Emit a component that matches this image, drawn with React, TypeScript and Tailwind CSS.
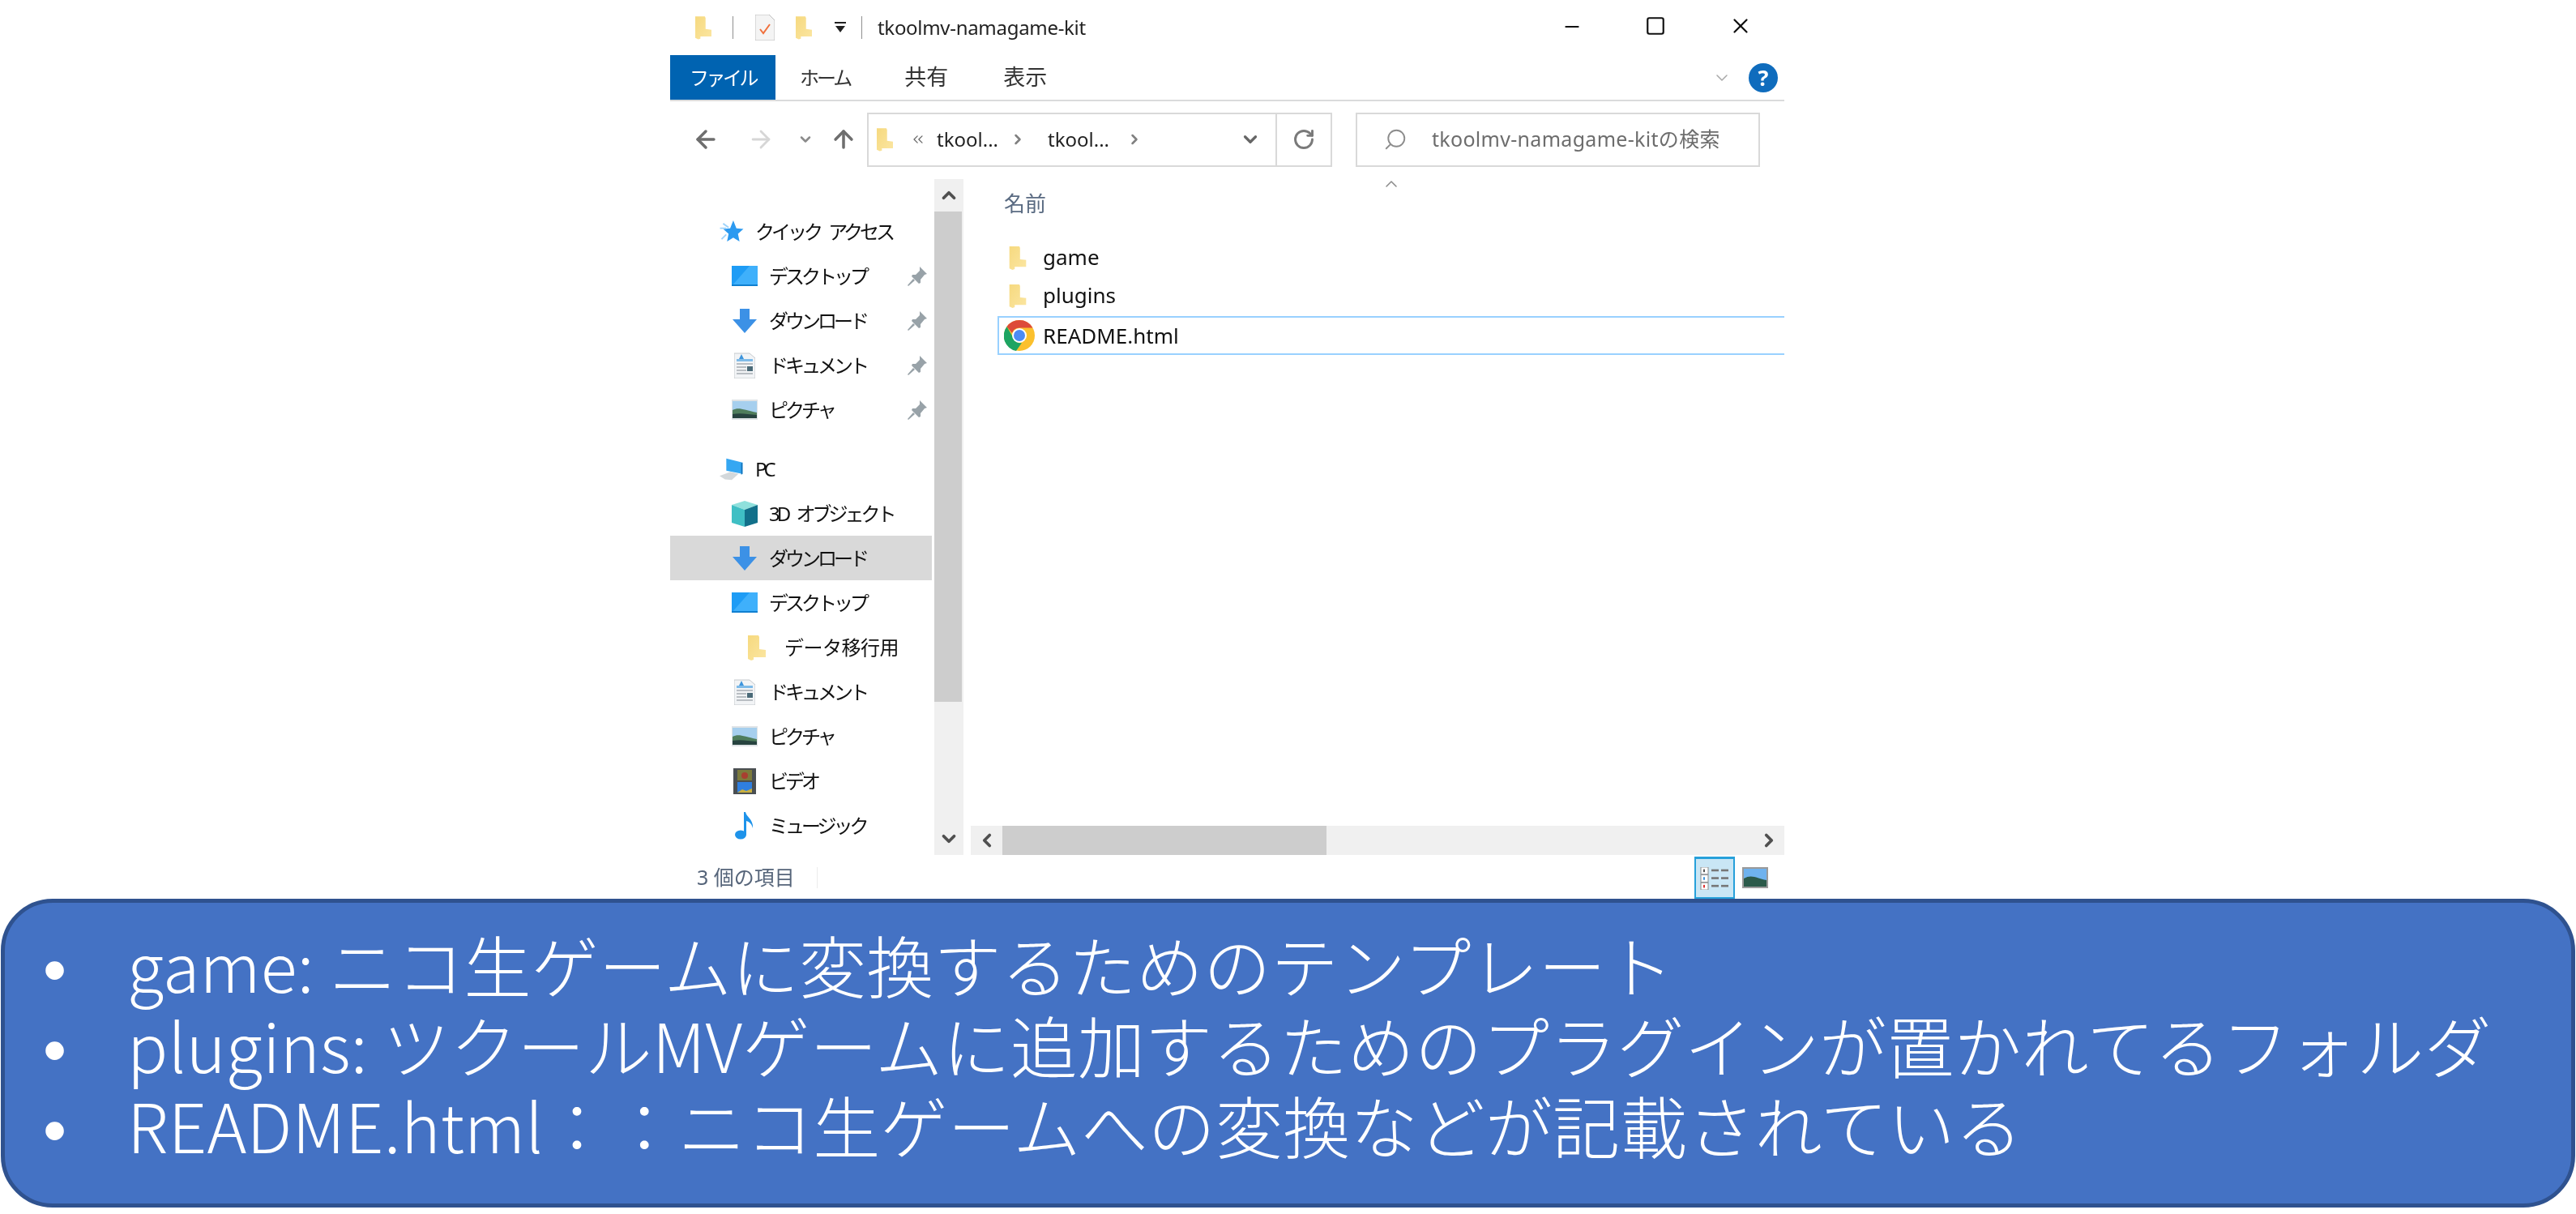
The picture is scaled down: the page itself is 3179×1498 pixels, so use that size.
import { ArrowLeft, ArrowRight, ArrowUp, ChevronDown, ChevronLeft, ChevronRight, ChevronUp, ChevronsLeft, RotateCw, Search, Minus, Square, X } from "lucide-react";

const uiFont = "font-['Noto_Sans','Noto_Sans_CJK_JP',sans-serif]";
const jpText = "text-[24px] tracking-[-4px] [word-spacing:8px] text-[#111]";

function Folder({ className = "" }: { className?: string }) {
  return (
    <svg viewBox="0 0 22 32" className={className}>
      <defs>
        <linearGradient id="fold" x1="0" y1="0" x2="1" y2="1">
          <stop offset="0" stopColor="#f6d97f" />
          <stop offset="1" stopColor="#fbe6a2" />
        </linearGradient>
      </defs>
      <path d="M0 1h13l1 2v15l8 1v9H7v3l-3 1-4-2z" fill="url(#fold)" />
    </svg>
  );
}

function Star() {
  return (
    <svg viewBox="0 0 30 28" className="w-[30px] h-[27px]">
      <path d="M17 0l4 10 9 1-7 6 2 10-8-5-8 5 2-10-7-6 9-1z" fill="#2c9af0" />
      <path d="M0 10h8M2 24l6-6M4 4l7 5" stroke="#9fd3fa" strokeWidth="2" />
    </svg>
  );
}

function Desktop() {
  return (
    <svg viewBox="0 0 32 25" className="w-[32px] h-[25px]">
      <rect width="32" height="25" fill="#1e9cf5" />
      <path d="M0 25L22 0h10v25z" fill="#3fb0fb" />
      <rect y="23" width="32" height="2" fill="#0f7fd0" />
    </svg>
  );
}

function Download() {
  return (
    <svg viewBox="0 0 30 30" className="w-[30px] h-[30px]">
      <path d="M9 0h12v13h9L15 30 0 13h9z" fill="#3c91e6" />
    </svg>
  );
}

function Doc() {
  return (
    <svg viewBox="0 0 26 32" className="w-[26px] h-[32px]">
      <path d="M0 1h19l7 6v25H0z" fill="#f2f4f6" stroke="#c4c8cc" />
      <rect x="3" y="8" width="20" height="3" fill="#7fbbe8" />
      <path d="M9 2l3 6H6z" fill="#3d94dc" />
      <path d="M3 14h20M3 18h12M3 22h12M3 26h20" stroke="#a6acb2" strokeWidth="1.5" />
      <rect x="16" y="17" width="7" height="6" fill="#4b6a78" />
    </svg>
  );
}

function Picture() {
  return (
    <svg viewBox="0 0 32 25" className="w-[32px] h-[25px]">
      <rect width="32" height="25" fill="#dfe3e6" />
      <rect x="1" y="2" width="30" height="21" fill="#a6cfee" />
      <path d="M1 13c8-4 14 0 30 3v7H1z" fill="#4f7d5c" />
      <path d="M1 18c10-2 18 0 30 1v4H1z" fill="#27433f" />
    </svg>
  );
}

function Pc() {
  return (
    <svg viewBox="0 0 36 32" className="w-[36px] h-[32px]">
      <path d="M10 0l24 6v17l-24-5z" fill="#35a7f2" />
      <path d="M34 6v17l-2 1V7z" fill="#1272b8" />
      <path d="M0 26l16-6 12 3-10 9-10-1z" fill="#d3d8db" />
    </svg>
  );
}

function Cube() {
  return (
    <svg viewBox="0 0 32 32" className="w-[32px] h-[32px]">
      <path d="M16 0l16 5-16 6L0 5z" fill="#8fe0dc" />
      <path d="M0 5l16 6v21L0 27z" fill="#3fbfc4" />
      <path d="M32 5L16 11v21l16-5z" fill="#12708a" />
    </svg>
  );
}

function Video() {
  return (
    <svg viewBox="0 0 28 32" className="w-[28px] h-[32px]">
      <rect width="28" height="32" fill="#4a4f52" />
      <rect x="5" y="2" width="18" height="13" fill="#7c7a3c" />
      <rect x="5" y="17" width="18" height="13" fill="#2f7fe0" />
      <circle cx="14" cy="9" r="4" fill="#a83f30" />
      <path d="M5 30l6-4 5 2 7-3v5z" fill="#c9b040" />
    </svg>
  );
}

function Music() {
  return (
    <svg viewBox="0 0 24 34" className="w-[24px] h-[34px]">
      <ellipse cx="7" cy="28" rx="7" ry="5.5" fill="#1e93ea" />
      <path d="M11 28V0h2c1 6 10 9 9 20-1-5-4-8-8-9v17z" fill="#1e93ea" />
    </svg>
  );
}

function Pin() {
  return (
    <svg viewBox="0 0 24 24" className="w-[24px] h-[24px]">
      <path d="M15 0l9 9-3 1-5 6 0 4-2 1-9-9 1-2 4 0 5-5z" fill="#98a2a8" />
      <path d="M7 15l-7 8 1 1 8-7z" fill="#98a2a8" />
    </svg>
  );
}

function Chrome() {
  return (
    <svg viewBox="0 0 38 38" className="w-[38px] h-[38px]">
      <circle cx="19" cy="19" r="19" fill="#fbc02d" />
      <path d="M19 0a19 19 0 0 1 16.5 9.500H19a9.500 9.500 0 0 0-9 6.500L3.500 8A19 19 0 0 1 19 0z" fill="#dd4b39" />
      <path d="M3.500 8L11 21a9.500 9.500 0 0 0 11 7L15 38A19 19 0 0 1 3.500 8z" fill="#1da462" />
      <circle cx="19" cy="19" r="9" fill="#fff" />
      <circle cx="19" cy="19" r="7" fill="#4c8bf5" />
    </svg>
  );
}

function DetailsView() {
  return (
    <svg viewBox="0 0 36 32" preserveAspectRatio="none" className="w-[36px] h-[28px]">
      {[0, 11, 22].map((y, i) => (
        <g key={y}>
          <rect x="1" y={y} width="9" height="10" fill="#fff" stroke="#8a8a8a" />
          <rect x="4" y={y + 3} width="2" height="4" fill={["#555", "#3d94dc", "#d33"][i]} />
          <rect x="14" y={y + 3} width="9" height="3" fill="#777" />
          <rect x="26" y={y + 3} width="9" height="3" fill="#777" />
        </g>
      ))}
    </svg>
  );
}

function NavRow({ icon, label, pin, level = 1, selected, kanji }: { icon: React.ReactNode; label: string; pin?: boolean; level?: 0 | 1 | 2; selected?: boolean; kanji?: boolean }) {
  const indent = level === 0 ? "pl-[61px] gap-[14px]" : level === 2 ? "pl-[96px] gap-[23px]" : "pl-[76px] gap-[14px]";
  return (
    <div className={`h-[55px] flex items-center pr-[6px] ${indent} ${selected ? "bg-[#d9d9d9]" : ""}`}>
      <span className={`flex justify-center shrink-0 ${level === 0 ? "w-[30px]" : level === 2 ? "w-[22px]" : "w-[32px]"}`}>{icon}</span>
      <span className={kanji ? "text-[24px] tracking-[-0.500px] text-[#111]" : jpText}>{label}</span>
      {pin && <span className="ml-auto"><Pin /></span>}
    </div>
  );
}

function Explorer() {
  return (
    <div className={`ml-[827px] w-[1375px] h-[1109px] shrink-0 flex flex-col overflow-hidden blur-[0.7px] ${uiFont}`}>
      {/* title bar */}
      <div className="h-[68px] flex items-center relative">
        <Folder className="ml-[31px] w-[20px] h-[32px]" />
        <span className="ml-[26px] w-[1px] h-[28px] bg-[#8f8f8f]" />
        <svg viewBox="0 0 24 32" className="ml-[27px] w-[24px] h-[32px]">
          <path d="M0 0h17l7 7v25H0z" fill="#f4f4f4" stroke="#bdbdbd" />
          <path d="M6 18l4 5 8-11" fill="none" stroke="#f0703c" strokeWidth="2" />
        </svg>
        <Folder className="ml-[26px] w-[20px] h-[32px]" />
        <svg viewBox="0 0 14 14" className="ml-[28px] w-[14px] h-[14px]">
          <rect y="0" width="14" height="2" fill="#222" />
          <path d="M1 5h12L7 13z" fill="#222" />
        </svg>
        <span className="ml-[19px] w-[1px] h-[28px] bg-[#8f8f8f]" />
        <span className="ml-[19px] text-[24px] text-[#222] tracking-[-0.3px]">tkoolmv-namagame-kit</span>
        <Minus size={26} strokeWidth={2} className="absolute left-[1100px] top-[20px] text-[#111]" />
        <Square size={26} strokeWidth={2} className="absolute left-[1203px] top-[19px] text-[#111]" />
        <X size={30} strokeWidth={1.8} className="absolute left-[1306px] top-[17px] text-[#111]" />
      </div>

      {/* ribbon tabs */}
      <div className="h-[57px] flex items-start border-b-[2px] border-[#dadbdc] relative">
        <div className="w-[130px] h-[55px] bg-[#0063b1] text-white flex items-center justify-center text-[24px] tracking-[-3.500px]">ファイル</div>
        <span className="ml-[30px] h-[55px] flex items-center text-[24px] tracking-[-3px] text-[#333]">ホーム</span>
        <span className="ml-[67px] h-[55px] flex items-center text-[27px] text-[#333]">共有</span>
        <span className="ml-[68px] h-[55px] flex items-center text-[27px] text-[#333]">表示</span>
        <ChevronDown size={24} strokeWidth={1.500} className="absolute left-[1286px] top-[16px] text-[#a8a8a8]" />
        <span className="absolute left-[1331px] top-[10px] w-[36px] h-[36px] rounded-full bg-[#0f6cbd] text-white font-bold text-[27px] leading-[36px] text-center">?</span>
      </div>

      {/* address row */}
      <div className="h-[96px] pb-[2px] flex items-center">
        <ArrowLeft size={34} strokeWidth={2.500} className="ml-[27px] text-[#6e6e6e]" />
        <ArrowRight size={34} strokeWidth={2} className="ml-[34px] text-[#d6d6d6]" />
        <ChevronDown size={20} strokeWidth={3} className="ml-[28px] text-[#8a8a8a]" />
        <ArrowUp size={34} strokeWidth={2.500} className="ml-[20px] text-[#6e6e6e]" />
        <div className="ml-[12px] w-[574px] h-[67px] border-2 border-[#d9d9d9] flex items-center">
          <Folder className="ml-[10px] w-[20px] h-[32px]" />
          <ChevronsLeft size={20} strokeWidth={1.500} className="ml-[21px] text-[#666]" />
          <span className="ml-[13px] text-[24px] text-[#222]">tkool...</span>
          <ChevronRight size={20} strokeWidth={3} className="ml-[14px] text-[#808080]" />
          <span className="ml-[27px] text-[24px] text-[#222]">tkool...</span>
          <ChevronRight size={20} strokeWidth={3} className="ml-[21px] text-[#808080]" />
          <div className="ml-auto h-full flex items-center">
            <ChevronDown size={26} strokeWidth={3} className="mr-[18px] text-[#666]" />
            <div className="w-[68px] h-full border-l-2 border-[#d9d9d9] flex items-center justify-center">
              <RotateCw size={28} strokeWidth={2.500} className="text-[#7a7a7a]" />
            </div>
          </div>
        </div>
        <div className="ml-[29px] w-[499px] h-[67px] border-2 border-[#d9d9d9] flex items-center text-[25px] tracking-[0.3px] text-[#6d6d6d]">
          <Search size={30} strokeWidth={1.500} className="ml-[32px] -scale-x-100 text-[#8c8c8c]" />
          <span className="ml-[30px] whitespace-nowrap">tkoolmv-namagame-kitの検索</span>
        </div>
      </div>

      {/* navigation pane and file list */}
      <div className="flex-1 min-h-0 flex">
        <div className="w-[323px] shrink-0 pt-[37px]">
          <NavRow level={0} icon={<Star />} label="クイック アクセス" />
          <NavRow icon={<Desktop />} label="デスクトップ" pin />
          <NavRow icon={<Download />} label="ダウンロード" pin />
          <NavRow icon={<Doc />} label="ドキュメント" pin />
          <NavRow icon={<Picture />} label="ピクチャ" pin />
          <div className="h-[18px]" />
          <NavRow level={0} icon={<Pc />} label="PC" />
          <NavRow icon={<Cube />} label="3D オブジェクト" />
          <NavRow icon={<Download />} label="ダウンロード" selected />
          <NavRow icon={<Desktop />} label="デスクトップ" />
          <NavRow level={2} kanji icon={<Folder className="w-[22px] h-[32px]" />} label="データ移行用" />
          <NavRow icon={<Doc />} label="ドキュメント" />
          <NavRow icon={<Picture />} label="ピクチャ" />
          <NavRow icon={<Video />} label="ビデオ" />
          <NavRow icon={<Music />} label="ミュージック" />
        </div>

        <div className="ml-[3px] w-[36px] shrink-0 mb-[2px] bg-[#f0f0f0] flex flex-col">
          <div className="h-[40px] flex items-center justify-center"><ChevronUp size={26} strokeWidth={3.500} className="text-[#505050]" /></div>
          <div className="h-[605px] w-[34px] bg-[#cdcdcd]" />
          <div className="mt-auto h-[40px] flex items-center justify-center"><ChevronDown size={26} strokeWidth={3.500} className="text-[#505050]" /></div>
        </div>

        <div className="ml-[9px] flex-1 min-w-0 flex flex-col relative">
          <ChevronUp size={24} strokeWidth={1.500} className="absolute left-[507px] top-[-6px] text-[#8a8a8a]" />
          <div className="h-[60px] flex items-center pl-[41px] text-[26px] text-[#5a6b82]">名前</div>
          <div className="mt-[13px] h-[47px] flex items-center pl-[47px] text-[26px] text-[#111]">
            <Folder className="w-[22px] h-[30px]" />
            <span className="ml-[20px]">game</span>
          </div>
          <div className="h-[47px] flex items-center pl-[47px] text-[26px] text-[#111]">
            <Folder className="w-[22px] h-[30px]" />
            <span className="ml-[20px]">plugins</span>
          </div>
          <div className="mt-[2px] ml-[33px] -mr-[4px] h-[48px] flex items-center border-2 border-[#99d1ff] pl-[6px] text-[26px] text-[#111]">
            <Chrome />
            <span className="ml-[10px]">README.html</span>
          </div>
          <div className="mt-auto mb-[2px] h-[36px] bg-[#f0f0f0] flex items-center">
            <div className="w-[39px] flex justify-center"><ChevronLeft size={26} strokeWidth={3.500} className="text-[#505050]" /></div>
            <div className="w-[400px] h-full bg-[#cdcdcd]" />
            <div className="ml-auto w-[39px] flex justify-center"><ChevronRight size={26} strokeWidth={3.500} className="text-[#505050]" /></div>
          </div>
        </div>
      </div>

      {/* status bar */}
      <div className="h-[52px] shrink-0 flex items-center">
        <span className="ml-[33px] text-[25px] text-[#56657a]">3 個の項目</span>
        <span className="ml-[27px] w-[1px] h-[26px] bg-[#ececec]" />
        <div className="ml-auto w-[50px] h-full border-2 border-t-[3px] border-[#26a0da] bg-[#c9e6f5] flex items-center justify-center">
          <DetailsView />
        </div>
        <svg viewBox="0 0 32 26" className="ml-[9px] mr-[20px] w-[32px] h-[26px]">
          <rect width="32" height="26" fill="#9a9a9a" />
          <rect x="2" y="2" width="28" height="22" fill="#6fb2ee" />
          <path d="M2 14c10-6 16 0 28 2v8H2z" fill="#2c5a4a" />
        </svg>
      </div>
    </div>
  );
}

const notes = [
  "game: ニコ生ゲームに変換するためのテンプレート",
  "plugins: ツクールMVゲームに追加するためのプラグインが置かれてるフォルダ",
  "README.html：：ニコ生ゲームへの変換などが記載されている",
];

export default function App() {
  return (
    <div className="w-[3179px] h-[1498px] bg-white flex flex-col overflow-hidden">
      <Explorer />
      <div className="mx-[1px] h-[381px] shrink-0 bg-[#4472c4] border-[5px] border-[#2f528f] rounded-[64px] flex flex-col justify-center pb-[22px] text-white font-['Noto_Sans_CJK_JP',sans-serif] font-light text-[83px] tracking-[0.2px] leading-[99px]">
        {notes.map((n) => (
          <div key={n} className="h-[99px] flex items-baseline">
            <span className="w-[151px] pl-[47px] shrink-0 font-normal font-['Liberation_Sans',sans-serif]">•</span>
            <span className="whitespace-nowrap">{n}</span>
          </div>
        ))}
      </div>
    </div>
  );
}
